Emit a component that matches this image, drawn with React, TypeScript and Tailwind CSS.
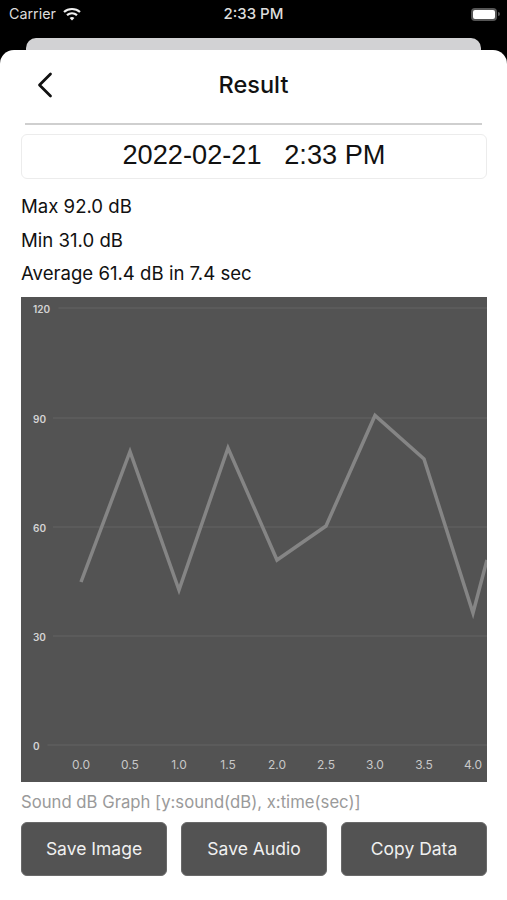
import { ChevronLeft } from "lucide-react";

const yTicks = [
  { label: "120", y: 308 },
  { label: "90", y: 418 },
  { label: "60", y: 527 },
  { label: "30", y: 636 },
  { label: "0", y: 745 },
];

const xTicks = ["0.0", "0.5", "1.0", "1.5", "2.0", "2.5", "3.0", "3.5", "4.0"];

const linePoints = [
  [81, 582],
  [130, 451.5],
  [179, 590],
  [228, 448],
  [277, 560],
  [326, 526],
  [375, 415.5],
  [424, 459],
  [473, 613],
  [487, 560],
];

const actionClass =
  "flex h-[54px] w-[146px] items-center justify-center rounded-[6px] border border-[#6a6a6a] bg-[#535353] pt-[2px] text-[17.5px] text-[#f0f0f0]";

function Chart() {
  const top = 297;
  const left = 21;
  return (
    <svg viewBox="0 0 466 485" className="block h-[485px] w-[466px] bg-[#535353]">
      {yTicks.map((t) => (
        <g key={t.label}>
          <line
            x1={t.label.length * 5.5 + 21}
            x2={466}
            y1={t.y - top}
            y2={t.y - top}
            stroke="#646464"
          />
          <text x={12} y={t.y - top + 5} fontSize={10} fontWeight={600} fill="#d4d4d4">
            {t.label}
          </text>
        </g>
      ))}
      {xTicks.map((t, i) => (
        <text key={t} x={60 + i * 49} y={472} fontSize={12} fill="#c8c8c8" textAnchor="middle">
          {t}
        </text>
      ))}
      <polyline
        points={linePoints.map(([x, y]) => `${x - left},${y - top}`).join(" ")}
        fill="none"
        stroke="#858585"
        strokeWidth={3.5}
      />
    </svg>
  );
}

export default function App() {
  return (
    <div className="flex h-[900px] w-[507px] flex-col overflow-hidden bg-black font-['Inter','Liberation_Sans',sans-serif]">
      <div className="flex h-[28px] shrink-0 items-center pl-[9px] pr-[7px] text-[14.3px] text-[#dcdcdc]">
        <span>Carrier</span>
        <svg viewBox="0 0 18 14" className="ml-[7px] h-[14px] w-[18px]" fill="none" stroke="#f0f0f0" strokeWidth={2.2}>
          <path d="M1 5c4.5-4 11.5-4 16 0" />
          <path d="M4 8.2c3-2.6 7-2.6 10 0" />
          <path d="M9 13.5 6.6 10.9c1.4-1.1 3.4-1.1 4.8 0z" fill="#f0f0f0" stroke="none" />
        </svg>
        <span className="flex-1 pr-[45px] text-center text-[15px] font-medium">2:33 PM</span>
        <div className="flex items-center">
          <div className="h-[13px] w-[26px] rounded-[4px] border-2 border-[#555] bg-white" />
          <div className="ml-[1px] h-[4px] w-[2px] rounded-r-sm bg-[#555]" />
        </div>
      </div>
      <div className="mx-[26px] mt-[10px] h-[12px] shrink-0 rounded-t-[10px] bg-[#d2d2d4]" />
      <div className="flex flex-1 flex-col rounded-t-[14px] bg-white pl-[21px] pr-[20px]">
        <div className="relative ml-[4px] mr-[5px] flex h-[75px] shrink-0 items-center justify-center border-b-2 border-[#cfcfcf] pb-[4px]">
          <ChevronLeft className="absolute left-[-2px] top-[13px] h-[44px] w-[44px] text-[#111]" strokeWidth={1.5} />
          <span className="text-[23.5px] font-medium text-[#111]">Result</span>
        </div>
        <div className="mt-[9px] flex h-[45px] items-center justify-center whitespace-pre rounded-[6px] border border-[#ececec] pb-[2px] font-['Liberation_Sans',sans-serif] text-[27.2px] text-[#111]">
          2022-02-21{"   "}2:33 PM
        </div>
        <div className="mt-[10px] flex flex-col pt-[1px] text-[18.6px] leading-[33.5px] text-[#111]">
          <span>Max 92.0 dB</span>
          <span>Min 31.0 dB</span>
          <span>Average 61.4 dB in 7.4 sec</span>
        </div>
        <div className="mt-[6px]">
          <Chart />
        </div>
        <div className="mt-[9px] text-[16.7px] leading-[22px] text-[#9a9a9a]">
          Sound dB Graph [y:sound(dB), x:time(sec)]
        </div>
        <div className="mt-[9px] flex justify-between">
          <div className={actionClass}>Save Image</div>
          <div className={actionClass}>Save Audio</div>
          <div className={actionClass}>Copy Data</div>
        </div>
      </div>
    </div>
  );
}
